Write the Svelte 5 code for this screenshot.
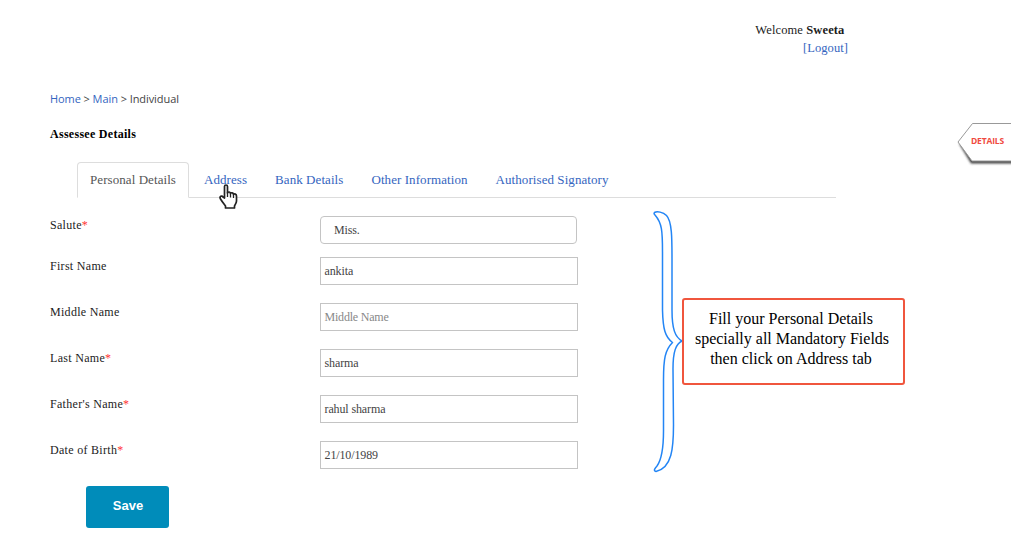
<script>
  const tabs = [
    { label: 'Personal Details', active: true },
    { label: 'Address' },
    { label: 'Bank Details' },
    { label: 'Other Information' },
    { label: 'Authorised Signatory' }
  ];
  const fields = [
    { label: 'Salute', required: true, value: 'Miss.', kind: 'select' },
    { label: 'First Name', value: 'ankita' },
    { label: 'Middle Name', value: 'Middle Name', kind: 'placeholder' },
    { label: 'Last Name', required: true, value: 'sharma' },
    { label: "Father's Name", required: true, value: 'rahul sharma' },
    { label: 'Date of Birth', required: true, value: '21/10/1989' }
  ];
</script>

<div class="page">
  <header>
    <div class="welcome">Welcome <b>Sweeta</b></div>
    <a class="logout">[Logout]</a>
  </header>

  <nav class="crumbs"><a>Home</a> &gt; <a>Main</a> &gt; Individual</nav>
  <h1>Assessee Details</h1>

  <div class="tabs">
    {#each tabs as tab}
      <div class="tab" class:active={tab.active}>{tab.label}</div>
    {/each}
  </div>

  <div class="form">
    {#each fields as f}
      <div class="row" class:first={f.kind === 'select'}>
        <div class="label">{f.label}{#if f.required}<span class="star">*</span>{/if}</div>
        <div class="field {f.kind ?? ''}">{f.value}</div>
      </div>
    {/each}
  </div>
  <button>Save</button>

  <svg class="badge" width="60" height="50" viewBox="0 0 60 50">
    <defs>
      <filter id="soft" x="-20%" y="-20%" width="140%" height="150%"><feGaussianBlur stdDeviation="1" /></filter>
    </defs>
    <path d="M8 25.500L20 45.500H64V25Z" fill="#444" filter="url(#soft)" />
    <path d="M64 5.500H21.500L7 24L21 43H64" fill="#fff" stroke="#999" />
    <text x="20" y="26">DETAILS</text>
  </svg>

  <svg class="brace" width="36" height="270" viewBox="0 0 36 270">
    <path
      d="M4.500 4.500C7 3 13 4 16.500 7.500C22 13 22 31 22 50V102C22 121 25 129 32 133C26 136 23 143 23 161L23.500 217C23.500 240 22 260 6 263.500C3 263 5 260 7 258C12 251 13.500 240 13.500 223V172C13.500 151 15 142 22.500 134.500C15 129 13 121 12.500 102V44C12.500 23 12 15 5 7C4 6 4 5 4.500 4.500Z"
      fill="#fff" stroke="#2385f5" stroke-width="1.500" stroke-linejoin="round" />
  </svg>

  <div class="callout">
    <div class="narrow">Fill your Personal Details</div>
    <div>specially all Mandatory Fields</div>
    <div class="narrow">then click on Address tab</div>
  </div>

  <svg class="cursor" width="22" height="28" viewBox="0 0 22 28">
    <path
      d="M6.500 16V4.500C6.500 2.500 9.500 2.500 9.500 4.500V11C10 9.500 12.500 9.700 12.500 11.500C13 10.300 15.500 10.600 15.500 12.500C16.500 11.500 18.500 12 18.500 14V19C18.500 21 17 22.500 16.500 24V26H7.500V24C6 22 4 19.500 2.500 17C1 14.500 4 13 5 15Z"
      fill="#fff" stroke="#222" stroke-width="1.700" stroke-linejoin="round" />
    <path d="M9.500 10V15M12.500 11V15.500M15.500 12.500V16" fill="none" stroke="#222" stroke-width="1.300" />
  </svg>
</div>

<style>
  :global(body) { margin: 0; background: #fff; }
  .page {
    position: relative;
    box-sizing: border-box;
    width: 1014px;
    height: 556px;
    overflow: hidden;
    padding: 21px 0 0 50px;
    font-family: "Liberation Serif", "Times New Roman", serif;
    font-size: 12px;
    color: #1c1c1c;
  }
  a { color: #3465c0; }
  header {
    display: flex;
    flex-direction: column;
    align-items: flex-end;
    width: 798px;
    line-height: 18px;
  }
  .welcome { margin-right: 3.500px; letter-spacing: 0.120px; font-size: 12.500px; }
  .logout { font-size: 12.500px; letter-spacing: 0.060px; }
  .crumbs {
    margin-top: 34px;
    height: 16px;
    font: 11px/16px "Open Sans", sans-serif;
    letter-spacing: -0.070px;
    color: #444;
  }
  h1 {
    margin: 19px 0 0;
    font-size: 12px;
    line-height: 16px;
    letter-spacing: 0.280px;
    color: #000;
  }
  .tabs {
    display: flex;
    box-sizing: border-box;
    width: 759px;
    height: 36px;
    margin: 20px 0 0 27px;
    border-bottom: 1px solid #ddd;
  }
  .tab {
    box-sizing: border-box;
    height: 36px;
    padding: 0 12px;
    margin-right: 2px;
    border: 1px solid transparent;
    line-height: 34px;
    font-size: 13px;
    letter-spacing: 0.070px;
    white-space: nowrap;
    color: #3465c0;
  }
  .tab.active {
    border-color: #ddd;
    border-bottom-color: #fff;
    border-radius: 4px 4px 0 0;
    background: #fff;
    color: #555;
  }
  .form { height: 270px; padding-top: 18px; }
  .row { display: grid; grid-template-columns: 270px 258px; height: 46px; }
  .row.first { height: 41px; }
  .label { line-height: 18px; letter-spacing: 0.300px; }
  .star { color: #f33; }
  .field {
    box-sizing: border-box;
    width: 258px;
    height: 28px;
    padding-left: 3.500px;
    border: 1px solid #c4c4c4;
    line-height: 26px;
    letter-spacing: -0.120px;
    color: #444;
  }
  .select { width: 257px; padding-left: 13px; border-radius: 4px; }
  .placeholder { color: #888; letter-spacing: -0.200px; }
  button {
    display: block;
    width: 83px;
    height: 42px;
    margin-left: 36px;
    padding: 0 0 3px 1px;
    border: 0;
    border-radius: 3px;
    background: #008cba;
    color: #fff;
    font: bold 13px "Liberation Sans", Arial, sans-serif;
  }
  svg { position: absolute; display: block; }
  .badge { left: 951px; top: 118px; }
  .badge text { font: bold 8.500px "Open Sans", sans-serif; letter-spacing: -0.170px; fill: #f04a41; }
  .badge { width: 60px; }
  .brace { left: 650px; top: 208px; }
  .cursor { left: 218px; top: 182px; }
  .callout {
    position: absolute;
    left: 682px;
    top: 298px;
    box-sizing: border-box;
    width: 223px;
    height: 87px;
    padding: 9px 3px 0 0;
    border: 2px solid #f0563e;
    border-radius: 3px;
    background: #fff;
    font-size: 16px;
    line-height: 20px;
    text-align: center;
    color: #000;
    white-space: nowrap;
  }
  .narrow { padding-right: 2px; }
</style>
